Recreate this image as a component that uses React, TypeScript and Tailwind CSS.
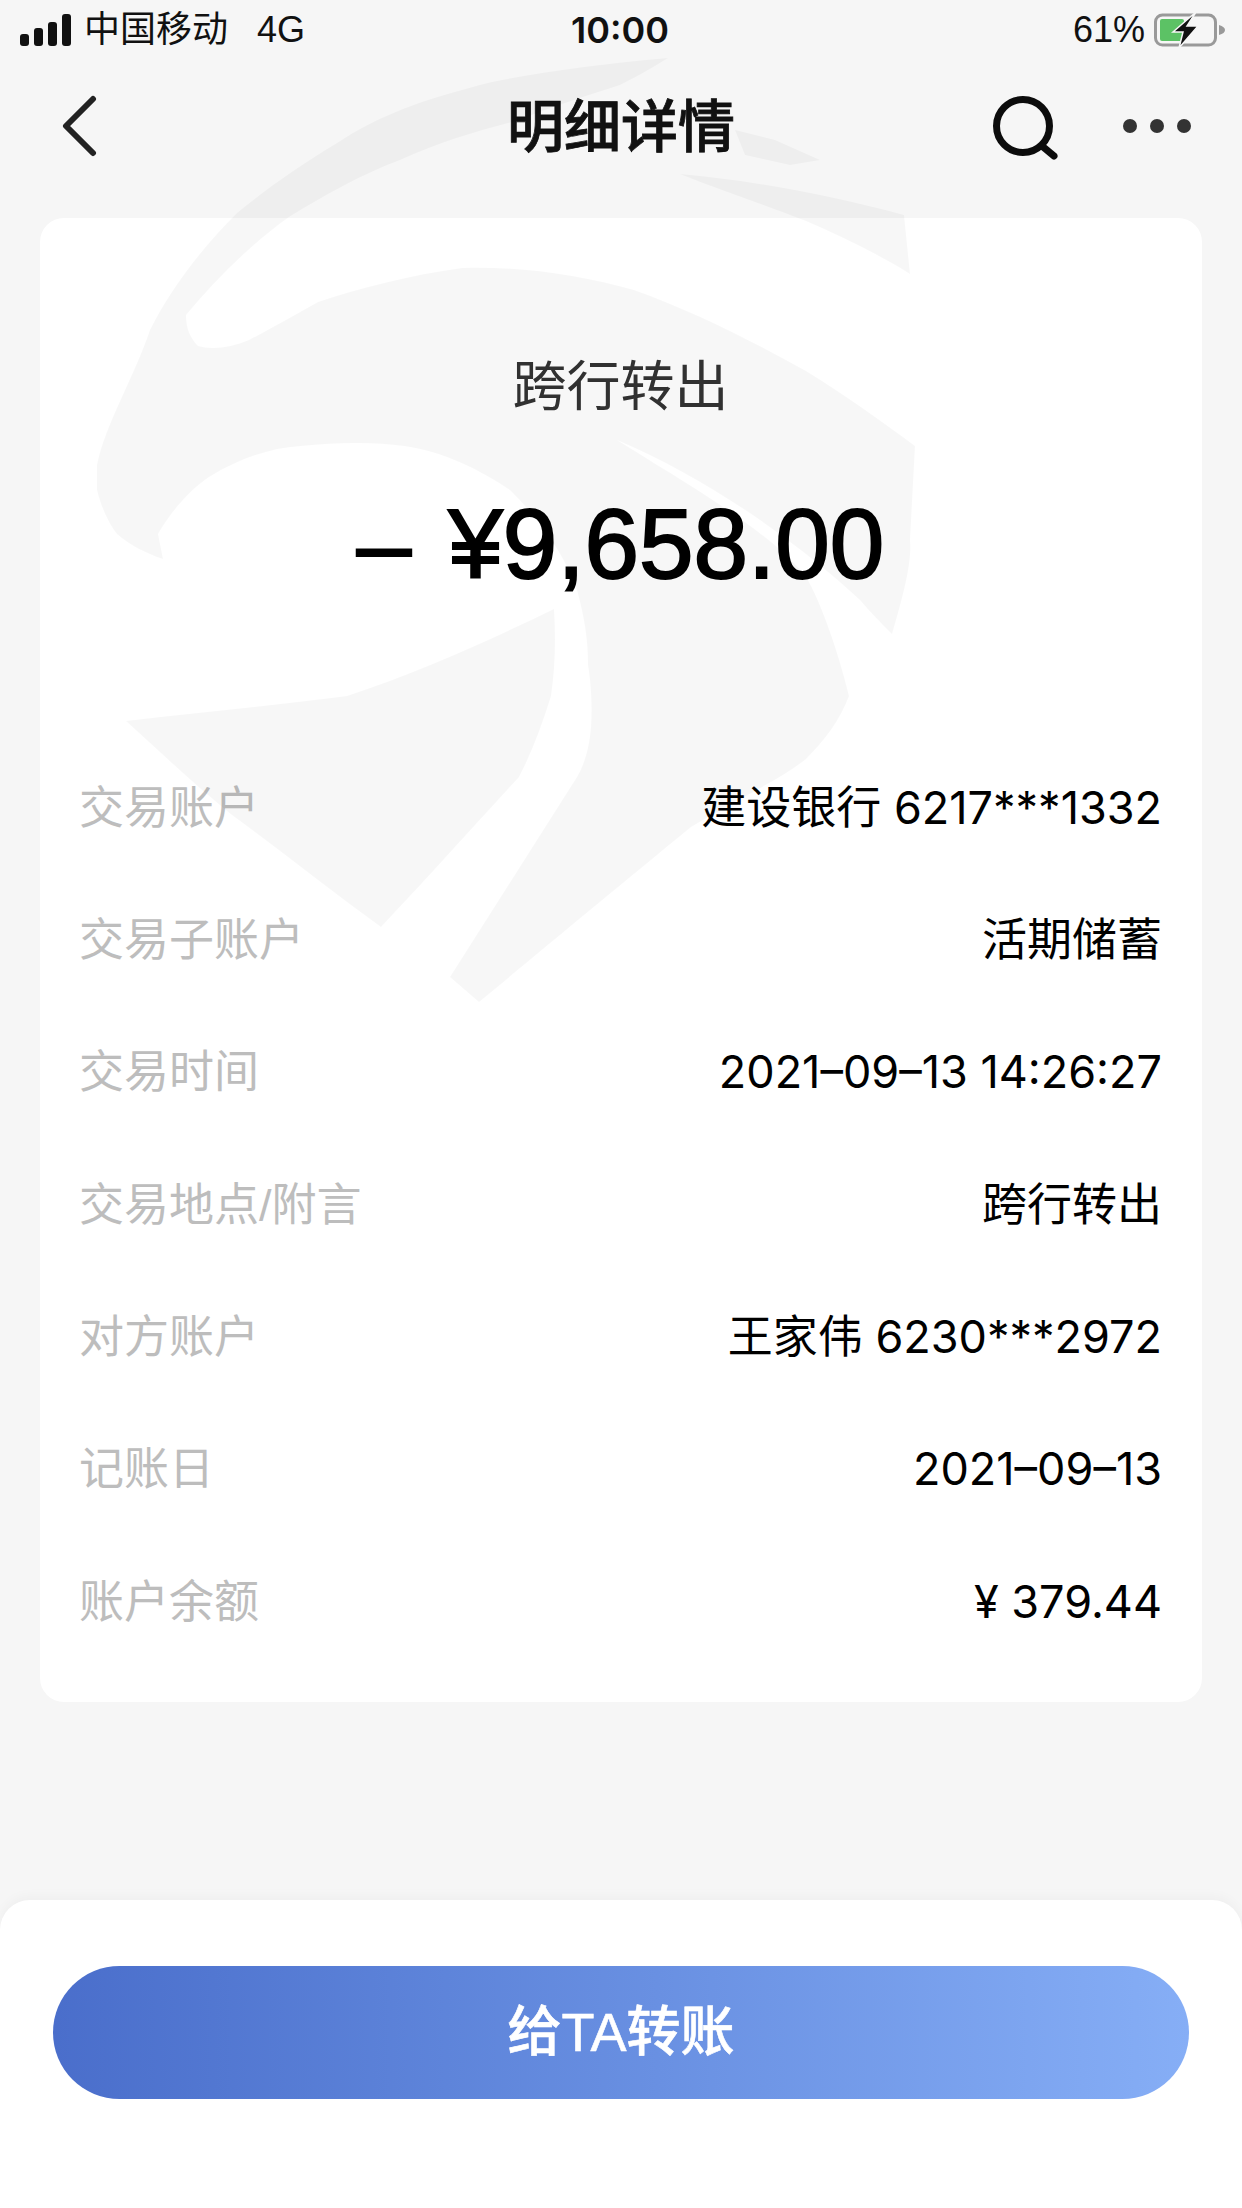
import * as React from "react";

const details = [
  { label: "交易账户", value: "建设银行 6217***1332" },
  { label: "交易子账户", value: "活期储蓄" },
  { label: "交易时间", value: "2021–09–13 14:26:27" },
  { label: "交易地点/附言", value: "跨行转出" },
  { label: "对方账户", value: "王家伟 6230***2972" },
  { label: "记账日", value: "2021–09–13" },
  { label: "账户余额", value: "¥ 379.44" },
];

function Watermark() {
  return (
    <svg
      className="pointer-events-none absolute inset-0"
      width="1242"
      height="2208"
      viewBox="0 0 1242 2208"
      fill="#000"
      fillOpacity="0.03"
    >
      <path d="M668 58 C600 64 540 72 492 82 C420 100 380 115 337 143 C300 165 265 190 237 213 C200 250 170 290 150 330 C135 375 105 425 97 465 L97 490 C102 510 110 525 117 534 C130 545 145 553 163 559 L158 534 C172 510 190 490 209 477 C240 458 270 448 301 446 C340 442 375 442 404 446 C445 452 480 470 510 490 C540 520 565 555 577 590 C585 620 588 640 588 665 C592 690 592 710 591 727 C589 750 584 765 577 777 L450 977 L479 1002 C530 960 620 885 691 827 C735 800 780 780 806 759 C825 740 840 720 849 696 C838 650 820 600 806 577 C770 530 680 480 617 440 C700 475 790 535 860 600 C870 612 882 624 892 634 C905 590 912 560 910 540 L915 446 C880 420 845 395 806 371 C750 340 695 312 634 290 C580 275 520 266 462 268 C410 275 360 288 318 302 C295 315 272 328 249 340 C230 348 212 350 198 346 C190 338 186 328 186 315 C215 280 250 245 289 217 C325 195 360 175 400 160 C440 142 480 130 520 120 C555 105 590 95 620 85 C640 75 655 66 668 58 Z" />
      <path d="M126 721 C200 712 280 705 347 696 C420 672 490 640 554 609 C556 640 555 670 551 696 C542 725 532 752 519 777 C475 825 430 875 381 927 C330 890 280 850 232 815 C195 785 160 752 126 721 Z" />
      <path d="M735 130 L775 140 L820 160 L790 165 L745 155 Z" />
      <path d="M680 174 C750 180 830 195 904 215 L910 274 C880 255 845 238 806 221 C765 205 720 190 680 174 Z" />
    </svg>
  );
}

function StatusBar() {
  return (
    <div className="flex h-[60px] items-center justify-between pl-[20px] pr-[16px] text-[36px] text-[#111]">
      <div className="flex w-[400px] items-center">
        <svg width="51" height="32" viewBox="0 0 51 32" fill="#111">
          <rect x="0" y="20" width="9" height="12" rx="3" />
          <rect x="14" y="14" width="9" height="18" rx="3" />
          <rect x="28" y="8" width="9" height="24" rx="3" />
          <rect x="42" y="0" width="9" height="32" rx="3" />
        </svg>
        <span className="ml-[13px]">中国移动</span>
        <span className="ml-[29px]">4G</span>
      </div>
      <span className="pr-[6px] font-semibold" style={{ fontFamily: 'Inter, "Liberation Sans", sans-serif' }}>
        10:00
      </span>
      <div className="flex w-[400px] items-center justify-end">
        <span>61%</span>
        <svg className="ml-[7px]" width="74" height="38" viewBox="0 0 74 38">
          <rect x="3.5" y="4" width="60" height="30" rx="7" fill="none" stroke="#999" strokeWidth="3" />
          <rect x="8" y="8" width="24" height="22" rx="2" fill="#5cc265" />
          <path d="M67 14 C71 15 73 17 73 19 C73 21 71 23 67 24 Z" fill="#999" />
          <path d="M44 1 L21 21 L31 21 L27 37 L46 15 L35 15 Z" fill="#111" stroke="#f6f6f6" strokeWidth="1.5" />
        </svg>
      </div>
    </div>
  );
}

function NavBar() {
  return (
    <div className="relative flex h-[130px] items-center justify-center">
      <svg className="absolute left-[60px] top-[35px]" width="38" height="62" viewBox="0 0 38 62" fill="none">
        <path d="M33 4 L6 31 L33 58" stroke="#222" strokeWidth="6" strokeLinecap="round" strokeLinejoin="round" />
      </svg>
      <span className="pt-[5px] text-[57px] font-medium text-[#111] [-webkit-text-stroke:0.8px_#111]">明细详情</span>
      <svg className="absolute left-[992px] top-[36px]" width="68" height="64" viewBox="0 0 68 64" fill="none">
        <circle cx="31" cy="30" r="26.5" stroke="#0c0c0c" strokeWidth="7" />
        <path d="M50 50 L62 60" stroke="#0c0c0c" strokeWidth="7" strokeLinecap="round" />
      </svg>
      <div className="absolute left-[1123px] top-[59px] flex gap-[13px]">
        <div className="h-[14px] w-[14px] rounded-full bg-[#333]" />
        <div className="h-[14px] w-[14px] rounded-full bg-[#333]" />
        <div className="h-[14px] w-[14px] rounded-full bg-[#333]" />
      </div>
    </div>
  );
}

export default function App() {
  return (
    <div
      className="relative flex h-[2208px] w-[1242px] flex-col overflow-hidden bg-[#f6f6f6]"
      style={{ fontFamily: '"Liberation Sans", "Noto Sans CJK SC", sans-serif' }}
    >
      <StatusBar />
      <NavBar />

      <div className="mx-[40px] mt-[28px] rounded-[24px] bg-white pb-[35px] pl-[39px] pr-[40px]">
        <div className="flex h-[523px] flex-col items-center">
          <div className="mt-[134px] text-[54px] leading-[70px] text-[#333]">跨行转出</div>
          <div className="mt-[62px] text-[98px] leading-[120px] text-black [-webkit-text-stroke:2px_black] [word-spacing:10px]">
            – ¥9,658.00
          </div>
        </div>
        {details.map((row) => (
          <div key={row.label} className="flex h-[132.3px] items-center justify-between pt-[3px] text-[45px]">
            <span className="text-[#bdbdbd]">{row.label}</span>
            <span
              className="mb-[2px] text-[45px] text-black"
              style={{ fontFamily: 'Inter, "Noto Sans CJK SC", sans-serif' }}
            >
              {row.value}
            </span>
          </div>
        ))}
      </div>

      <div className="mt-auto h-[308px] rounded-t-[30px] bg-white px-[53px] pt-[66px] shadow-[0_-4px_12px_rgba(0,0,0,0.03)]">
        <button className="flex h-[133px] w-full items-center justify-center rounded-full bg-gradient-to-r from-[#4a6ecb] to-[#86aef6] text-[54px] font-medium text-white [-webkit-text-stroke:0.6px_white]">
          给TA转账
        </button>
      </div>

      <Watermark />
    </div>
  );
}
